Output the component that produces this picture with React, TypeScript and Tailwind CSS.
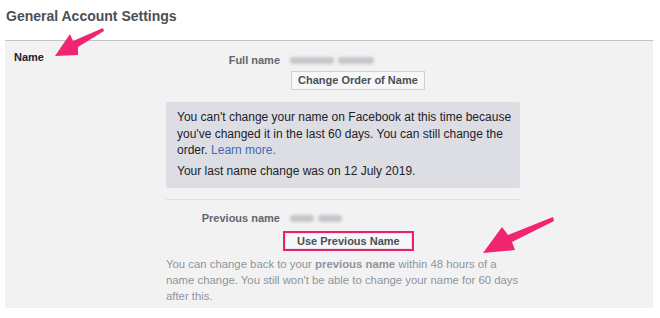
import React from 'react';

const BlurredValue: React.FC<{ widths: number[] }> = ({ widths }) => (
    <div className="flex items-center gap-[4px] h-[16px]">
        {widths.map((w, i) => (
            <div key={i} className="h-[7px] bg-[#c4c6cb] blur-[1.5px] rounded-sm" style={{ width: w }} />
        ))}
    </div>
);

const Arrows: React.FC = () => (
    <svg className="absolute inset-0 pointer-events-none" width={660} height={318}>
        {/* arrow pointing at "Name" */}
        <path
            d="M55 56 L70 34 L73 41 L103 28 L104 31 L78 47 L78 55 Z"
            fill="#f0246f"
        />
        {/* arrow pointing at the button */}
        <path
            d="M483 253 L502 227 L508 235 L553 217 L554 221 L512 242 L515 250 Z"
            fill="#f0246f"
        />
    </svg>
);

export default function App() {
    return (
        <div className="relative w-[660px] h-[318px] bg-white overflow-hidden" style={{ fontFamily: '"Liberation Sans", Arial, sans-serif' }}>
            <h1 className="pl-[6px] pt-[6px] text-[14px] leading-[20px] font-bold text-[#4b4f56]">General Account Settings</h1>

            <div className="ml-[5px] mt-[14px] w-[648px] h-[268px] border-t border-[#c4c4c4] bg-[#f2f2f2] flex">
                <div className="w-[161px] pl-[9px] pt-[8px] text-[11px] leading-[16px] font-bold text-[#1d2129]">Name</div>

                <div className="w-[354px] pt-[11px]">
                    {/* full name */}
                    <div className="flex items-center">
                        <div className="w-[114px] text-right text-[11px] leading-[16px] font-bold text-[#606770]">Full name</div>
                        <div className="ml-[10px]">
                            <BlurredValue widths={[44, 36]} />
                        </div>
                    </div>
                    <div className="mt-[3px] ml-[125px] flex">
                        <button className="h-[19px] px-[6px] bg-[#f6f7f9] border border-[#ced0d4] text-[11px] leading-[17px] font-bold text-[#4b4f56]">
                            Change Order of Name
                        </button>
                    </div>

                    {/* notice */}
                    <div className="mt-[12px] h-[86px] bg-[#dcdee3] rounded-[2px] px-[11px] pt-[7px] text-[12px] leading-[16.5px] text-[#1d2129] whitespace-nowrap">
                        <p>
                            You can't change your name on Facebook at this time because<br />
                            you've changed it in the last 60 days. You can still change the<br />
                            order. <span className="text-[#4267b2]">Learn more.</span>
                        </p>
                        <p className="mt-[4px]">Your last name change was on 12 July 2019.</p>
                    </div>

                    <div className="mt-[11px] h-px bg-[#dddfe2]" />

                    {/* previous name */}
                    <div className="mt-[10px] flex items-center">
                        <div className="w-[114px] text-right text-[11px] leading-[16px] font-bold text-[#606770]">Previous name</div>
                        <div className="ml-[10px]">
                            <BlurredValue widths={[24, 24]} />
                        </div>
                    </div>
                    <div className="mt-[5px] ml-[117px] flex">
                        <div className="flex border-2 border-[#ec1f6e]">
                            <button className="h-[16px] px-[11px] bg-[#f6f7f9] border border-[#e4e5e8] text-[11px] leading-[14px] font-bold text-[#4b4f56]">
                                Use Previous Name
                            </button>
                        </div>
                    </div>

                    <p className="mt-[5px] text-[11.35px] leading-[16px] text-[#90949c] whitespace-nowrap">
                        You can change back to your <span className="font-bold">previous name</span> within 48 hours of a<br />
                        name change. You still won't be able to change your name for 60 days<br />
                        after this.
                    </p>
                </div>
            </div>

            <Arrows />
        </div>
    );
}
